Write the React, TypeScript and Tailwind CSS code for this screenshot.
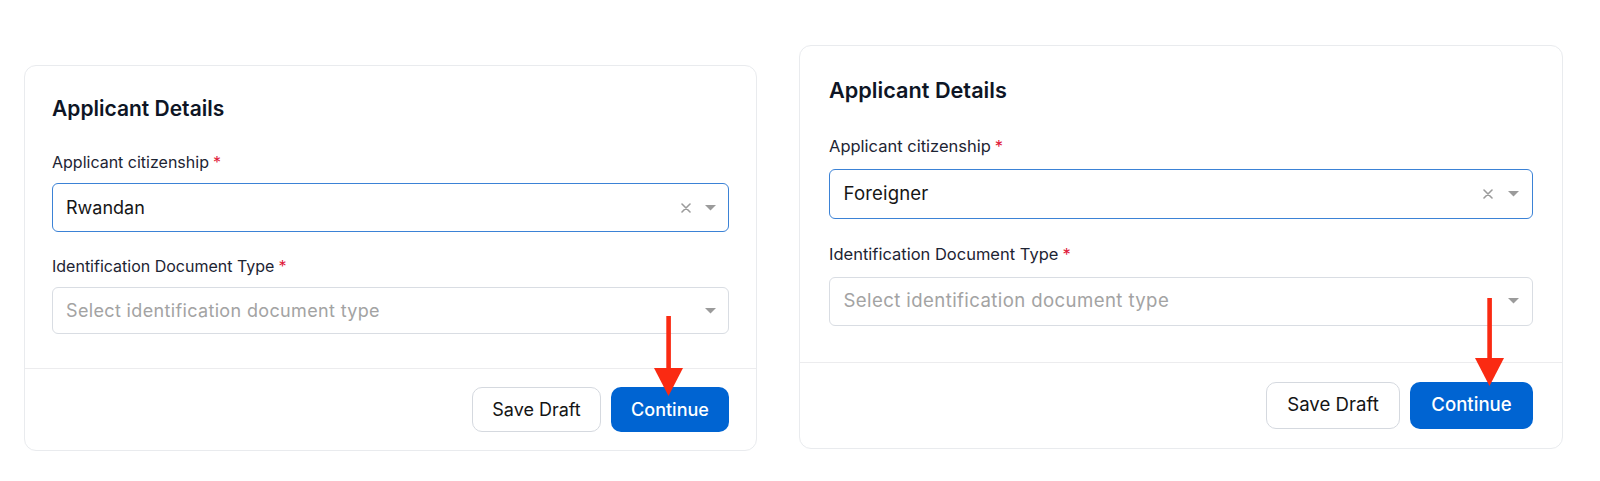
import React from "react";

type S = {
  card: string;
  body: string;
  title: string;
  label: string;
  star: string;
  gap1: string;
  gap2: string;
  gap3: string;
  input: string;
  select: string;
  text: string;
  placeholder: string;
  xPos: string;
  chevPos: string;
  footer: string;
  btnSave: string;
  btnCont: string;
  arrow: string;
  arrowH: number;
  arrowHead: number;
};

const left: S = {
  card: "mt-[65px] w-[733px] h-[386px]",
  body: "pt-[29px] px-[27px] pb-[34px]",
  title: "text-[21px] leading-[28px]",
  label: "text-[16px] leading-[24px]",
  star: "ml-[4px]",
  gap1: "mt-[27px]",
  gap2: "mt-[9px]",
  gap3: "mt-[22px]",
  input: "h-[49px] px-[13px]",
  select: "h-[47px] px-[13px]",
  text: "text-[18px]",
  placeholder: "text-[18px] tracking-[0.35px]",
  xPos: "right-[37px]",
  chevPos: "right-[12px]",
  footer: "pt-[18px] pb-[18px] px-[27px] gap-[10px]",
  btnSave: "w-[129px] h-[45px] text-[18px] rounded-[10px]",
  btnCont: "w-[118px] h-[45px] text-[18px] rounded-[10px]",
  arrow: "left-[629px] top-[250px]",
  arrowH: 80,
  arrowHead: 52,
};

const right: S = {
  card: "mt-[45px] w-[764px] h-[404px]",
  body: "pt-[30px] px-[29px] pb-[36px]",
  title: "text-[21.7px] leading-[29px]",
  label: "text-[16.5px] leading-[25px]",
  star: "ml-[4px]",
  gap1: "mt-[29px]",
  gap2: "mt-[9.5px]",
  gap3: "mt-[23.5px]",
  input: "h-[50px] px-[13.5px]",
  select: "h-[49px] px-[13.5px]",
  text: "text-[18.6px] tracking-[0.15px]",
  placeholder: "text-[18.6px] tracking-[0.4px]",
  xPos: "right-[39px]",
  chevPos: "right-[13px]",
  footer: "pt-[19px] pb-[18px] px-[29px] gap-[10px]",
  btnSave: "w-[134px] h-[47px] text-[18.6px] rounded-[10px]",
  btnCont: "w-[123px] h-[47px] text-[18.6px] rounded-[10px]",
  arrow: "left-[675px] top-[252px]",
  arrowH: 88,
  arrowHead: 60,
};

function XIcon() {
  return (
    <svg width="10" height="10" viewBox="0 0 10 10" className="block">
      <path d="M1 1 L9 9 M9 1 L1 9" stroke="#9b9b9b" strokeWidth="1.6" strokeLinecap="round" />
    </svg>
  );
}

function Chevron() {
  return (
    <svg width="11" height="6" viewBox="0 0 11 6" className="block">
      <path d="M0 0 H11 L5.5 5.5 Z" fill="#9b9b9b" />
    </svg>
  );
}

function Arrow({ s }: { s: S }) {
  const h = s.arrowH;
  const hd = s.arrowHead;
  return (
    <svg
      width="29"
      height={h}
      viewBox={`0 0 29 ${h}`}
      className={`absolute ${s.arrow} pointer-events-none`}
    >
      <rect x="12.3" y="0" width="4.6" height={hd + 4} fill="#fa2a12" />
      <path d={`M0 ${hd} H29 L14.5 ${h} Z`} fill="#fa2a12" />
    </svg>
  );
}

function Card({ s, value }: { s: S; value: string }) {
  return (
    <div
      className={`relative ${s.card} flex flex-col bg-white border border-[#e9ebee] rounded-[12px]`}
    >
      <div className={`${s.body} flex flex-col`}>
        <h2 className={`${s.title} font-semibold text-[#0e1525]`}>Applicant Details</h2>
        <div className={`${s.gap1} ${s.label} text-[#1d2433]`}>
          Applicant citizenship<span className={`${s.star} text-[#e0193a]`}>*</span>
        </div>
        <div
          className={`${s.gap2} ${s.input} relative flex items-center border border-[#3b82d6] rounded-[6px] bg-white`}
        >
          <span className={`${s.text} text-[#161616]`}>{value}</span>
          <span className={`absolute ${s.xPos} top-1/2 -translate-y-1/2`}>
            <XIcon />
          </span>
          <span className={`absolute ${s.chevPos} top-1/2 -translate-y-1/2`}>
            <Chevron />
          </span>
        </div>
        <div className={`${s.gap3} ${s.label} text-[#1d2433]`}>
          Identification Document Type<span className={`${s.star} text-[#e0193a]`}>*</span>
        </div>
        <div
          className={`${s.gap2} ${s.select} relative flex items-center border border-[#d9dde3] rounded-[6px] bg-white`}
        >
          <span className={`${s.placeholder} text-[#a3a3a3]`}>Select identification document type</span>
          <span className={`absolute ${s.chevPos} top-1/2 -translate-y-1/2`}>
            <Chevron />
          </span>
        </div>
      </div>
      <div className="h-px bg-[#ececee]" />
      <div className={`${s.footer} flex justify-end items-center`}>
        <button
          className={`${s.btnSave} border border-[#d5d9df] bg-white text-[#141414] flex items-center justify-center`}
        >
          Save Draft
        </button>
        <button
          className={`${s.btnCont} bg-[#0064d2] text-white font-medium flex items-center justify-center`}
        >
          Continue
        </button>
      </div>
      <Arrow s={s} />
    </div>
  );
}

export default function App() {
  return (
    <div
      className="w-[1600px] h-[481px] bg-white flex items-start pl-[24px] gap-[42px]"
      style={{ fontFamily: "Inter, 'Noto Sans', sans-serif" }}
    >
      <Card s={left} value="Rwandan" />
      <Card s={right} value="Foreigner" />
    </div>
  );
}
